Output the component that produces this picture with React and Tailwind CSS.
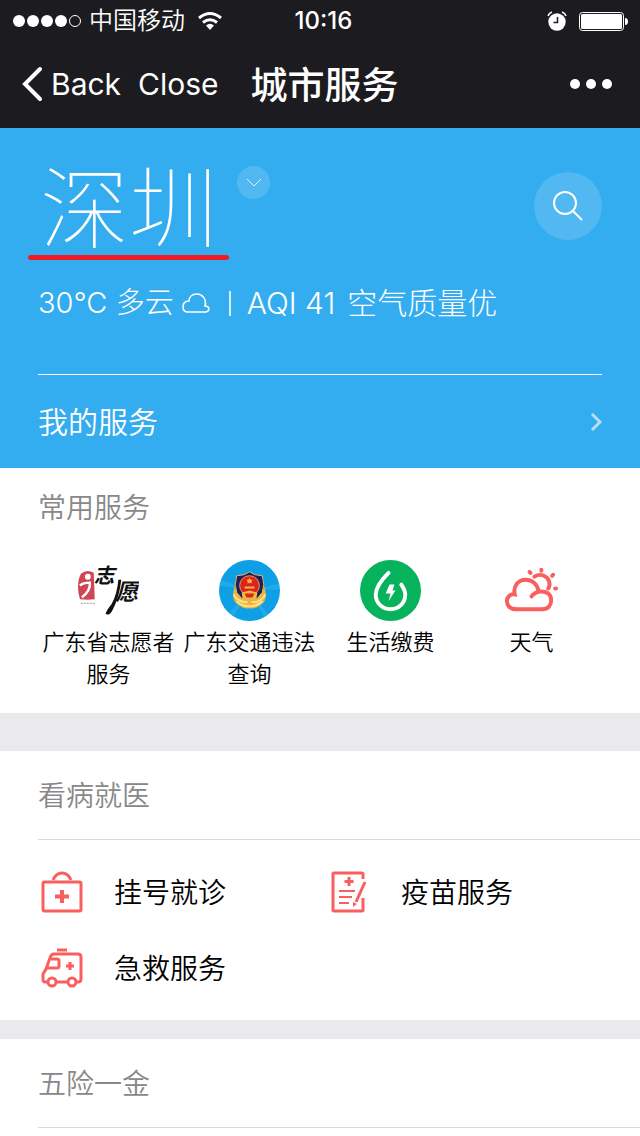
import React from 'react';

const FONT = "font-[Inter,'Noto_Sans_CJK_SC',sans-serif]";

const VolunteerLogo = () => (
  <svg viewBox="0 0 62 62" className="w-[61px] h-[61px]" aria-hidden="true">
    <path d="M3 14 Q9 9 16 13 L17 40 Q10 41 2 40 Q0 34 0 28 Q0 19 3 14Z" fill="#cf4655" />
    <circle cx="10" cy="17" r="3" fill="#fff" />
    <path d="M2 26 Q5 23 12 23 Q13 31 4 38" fill="none" stroke="#fff" strokeWidth="2.500" />
    <path d="M3 44 H17" stroke="#999" strokeWidth="1" strokeDasharray="2 1" />
    <g fill="#111" fontFamily="'Noto Sans CJK SC', sans-serif" fontWeight="700" fontStyle="italic">
      <text x="16" y="23" fontSize="21">志</text>
      <text x="38" y="41" fontSize="23">愿</text>
    </g>
    <path d="M41 20 L44 20 Q42 38 35 51 Q32 57 28 55 Q29 51 34 45 Q40 34 41 20Z" fill="#111" />
  </svg>
);

const TrafficLogo = () => (
  <svg viewBox="0 0 62 62" className="w-[61px] h-[61px]" aria-hidden="true">
    <circle cx="31" cy="31" r="31" fill="#0da0e6" />
    <path d="M31 31 L2 20 L1 26Z M31 31 L61 24 L61 30Z M31 31 L10 54 L15 57Z M31 31 L50 55 L46 58Z" fill="#3fb9f1" opacity=".4" />
    <path d="M16 27 Q11 41 20 46 Q25 50 31 49 Q37 50 42 46 Q51 41 46 27 L40 36 H22Z" fill="#eeb53a" />
    <path d="M15 35 Q19 43 29 43 M33 43 Q43 43 47 35 M18 42 Q23 47 31 47 Q39 47 44 42" fill="none" stroke="#fbe291" strokeWidth="2" />
    <path d="M31 12 Q36 16 44 16 Q47 25 44 33 L39 39 H23 L18 33 Q15 25 18 16 Q26 16 31 12Z" fill="#211f57" stroke="#dfba64" strokeWidth="1" />
    <circle cx="31" cy="26" r="10" fill="#dc231d" stroke="#e9a34b" strokeWidth="1" />
    <path d="M31 18 L32 20 L34 20 L33 22 L33 24 L31 23 L29 24 L29 22 L28 20 L30 20Z M26 27 H36 V29 H26Z M23 33 L31 31 L39 33 L38 39 H24Z" fill="#f6b83c" />
    <path d="M26 34 H36 L34 38 H28Z" fill="#dc231d" />
  </svg>
);

const PaymentLogo = () => (
  <svg viewBox="0 0 62 62" className="w-[61px] h-[61px]" aria-hidden="true">
    <circle cx="31" cy="31" r="31" fill="#06b35c" />
    <path d="M29 13 C22 20 16 27 16 35 C16 44 23 50 31 50 C39 50 46 44 46 35 C46 31 44 28 42 25" fill="none" stroke="#fff" strokeWidth="4" strokeLinecap="round" />
    <path d="M30 25 H35 L33 31 H36 L29 42 L31 34 H26Z" fill="#fff" />
  </svg>
);

const WeatherLogo = () => (
  <svg viewBox="0 0 62 62" className="w-[61px] h-[61px]" fill="none" stroke="#fa5f60" strokeWidth="4" strokeLinecap="round" aria-hidden="true">
    <path d="M15 50 H42 C48 50 51 46 51 41 C51 35 47 32 41 32 C36 32 32 35 31 37" />
    <path d="M15 50 C9 50 6 46 6 42 C6 37 10 34 14 35 C12 26 18 20 25 20 C32 20 37 25 38 31" />
    <path d="M34 17 C40 13 47 16 49 22 Q50 26 48 29" />
    <path d="M29 12 L30 13 M41 10 V11 M53 15 L52 16 M55 29 L56 29" />
  </svg>
);

const BagIcon = () => (
  <svg viewBox="0 0 48 48" className="size-12" fill="none" stroke="#fa5f60" strokeWidth="3" aria-hidden="true">
    <rect x="5" y="14" width="38" height="29" rx="1.5" />
    <path d="M15 12 Q18 5 24 5 Q30 5 33 12" />
    <path d="M24 22 V35 M17 28.5 H31" strokeWidth="4" />
  </svg>
);

const VaccineIcon = () => (
  <svg viewBox="0 0 48 48" className="size-12" fill="none" stroke="#fa5f60" strokeWidth="3" aria-hidden="true">
    <path d="M38 11 V6 Q38 5 37 5 H9 Q8 5 8 6 V42 Q8 43 9 43 H37 Q38 43 38 42 V30" />
    <path d="M24 9 V18 M19.5 13.5 H28.5" />
    <path d="M14 23 H30 M14 29 H27 M14 35 H24" strokeWidth="2" />
    <path d="M40 14 L31 34" />
    <path d="M28 34 L32 36 L28 39Z" fill="#fa5f60" stroke="none" />
  </svg>
);

const AmbulanceIcon = () => (
  <svg viewBox="0 0 48 48" className="size-12" fill="none" stroke="#fa5f60" strokeWidth="3" strokeLinejoin="round" aria-hidden="true">
    <path d="M10 38 H7 Q5 38 5 35 V30 Q7 27 8 25 L12 14 Q13 10 16 10 H40 Q43 10 43 13 V35 Q43 38 40 38 H39 M19 38 H29" />
    <path d="M13 15 H19 Q21 15 21 17 V22 Q21 24 19 24 H9" />
    <path d="M19 6 H29" />
    <path d="M32 18 V26 M28 22 H36" />
    <circle cx="14" cy="38" r="4" />
    <circle cx="34" cy="38" r="4" />
  </svg>
);

const commonServices = [
  { name: '广东省志愿者服务', Icon: VolunteerLogo },
  { name: '广东交通违法查询', Icon: TrafficLogo },
  { name: '生活缴费', Icon: PaymentLogo },
  { name: '天气', Icon: WeatherLogo },
];

const medicalServices = [
  { name: '挂号就诊', Icon: BagIcon },
  { name: '疫苗服务', Icon: VaccineIcon },
  { name: '急救服务', Icon: AmbulanceIcon },
];

function StatusBar() {
  return (
    <div className="grid grid-cols-[1fr_auto_1fr] items-center h-10 pl-[13px] pr-3">
      <div className="flex items-center">
        <div className="flex gap-[2px] mr-2">
          {[0, 1, 2, 3].map((i) => (
            <span key={i} className="size-3 rounded-full bg-white" />
          ))}
          <span className="size-3 rounded-full border border-white" />
        </div>
        <span className="text-[24px] leading-[42px] font-[350]">中国移动</span>
        <svg viewBox="0 0 26 20" className="w-[26px] h-5 ml-3" fill="none" stroke="#fff" strokeWidth="3" aria-hidden="true">
          <path d="M2 7 Q13 -2 24 7" />
          <path d="M6 11.500 Q13 6 20 11.500" />
          <path d="M9 14.500 Q13 11 17 14.500 L13 19Z" fill="#fff" stroke="none" />
        </svg>
      </div>
      <span className="pl-[6px] text-[24px] leading-[42px] font-medium">10:16</span>
      <div className="flex items-center justify-end gap-[11px]">
        <svg viewBox="0 0 20 20" className="size-5" aria-hidden="true">
          <circle cx="10" cy="11" r="8.700" fill="#fff" />
          <path d="M1 5 Q2 2 5 1 M15 1 Q18 2 19 5" fill="none" stroke="#fff" strokeWidth="1.600" />
          <path d="M10.500 6 V11.500 H6.500" fill="none" stroke="#1b1b20" strokeWidth="1.500" />
        </svg>
        <svg viewBox="0 0 50 20" className="w-[50px] h-5" aria-hidden="true">
          <rect x="1.500" y="1.500" width="44" height="18" rx="3" fill="none" stroke="#fff" />
          <rect x="3" y="3" width="41" height="15" rx="1.500" fill="#fff" />
          <path d="M47 7 Q50 7 50 10.500 Q50 14 47 14Z" fill="#fff" />
        </svg>
      </div>
    </div>
  );
}

function NavBar() {
  return (
    <nav className="flex items-center h-[88px] pl-[22px] pr-7 text-[30px]">
      <button className="flex items-center gap-2">
        <svg viewBox="0 0 21 36" className="w-[21px] h-9" fill="none" stroke="#fff" strokeWidth="4" strokeLinecap="round" aria-hidden="true">
          <path d="M18 3 L3 18 L18 33" />
        </svg>
        Back
      </button>
      <button className="ml-[17px]">Close</button>
      <h1 className="ml-8 pt-1 text-[37px] font-medium">城市服务</h1>
      <button aria-label="More" className="ml-auto flex gap-[6px]">
        <span className="size-[10px] rounded-full bg-white" />
        <span className="size-[10px] rounded-full bg-white" />
        <span className="size-[10px] rounded-full bg-white" />
      </button>
    </nav>
  );
}

function Hero() {
  return (
    <section className="bg-[#34acf0] text-white px-[38px]">
      <div className="flex items-start h-[155px]">
        <div className="-ml-[10px] pt-[35px]">
          <h2 className="pl-3 pr-2 text-[89px] leading-[92px] font-thin">深圳</h2>
          <div className="h-[5px] w-[201px] rounded-full bg-[#ee1c22]" />
        </div>
        <button aria-label="切换城市" className="mt-[38px] ml-2 size-[33px] rounded-full bg-white/15 flex items-center justify-center">
          <svg viewBox="0 0 16 10" className="w-4 h-[10px]" fill="none" stroke="#fff" strokeOpacity=".8" aria-hidden="true">
            <path d="M1 1 L8 8 L15 1" />
          </svg>
        </button>
        <button aria-label="搜索" className="ml-auto mt-11 size-[68px] rounded-full bg-white/15 flex items-center justify-center">
          <svg viewBox="0 0 32 32" className="size-8" fill="none" stroke="#fff" strokeWidth="2" aria-hidden="true">
            <circle cx="13" cy="13" r="11" />
            <path d="M21 21 L30 30" />
          </svg>
        </button>
      </div>
      <div className="flex items-center h-10 mb-[51px] text-[29px] leading-[42px] font-light">
        <span>30°C 多云</span>
        <svg viewBox="0 0 28 20" className="w-7 h-5 ml-2 mr-[19px]" fill="none" stroke="#fff" strokeWidth="1.600" aria-hidden="true">
          <path d="M6 19 H24 C28 18 28 13 23 13 C25 6 20 1 15 1 C10 1 7 4 7 8 C3 8 1 10 1 14 C1 17 3 19 6 19Z" />
        </svg>
        <span className="w-[2px] h-[25px] bg-white/80 mr-4" />
        <span className="mr-3 text-[30px]">AQI 41</span>
        <span className="text-[30px]">空气质量优</span>
      </div>
      <a href="#my-services" className="flex items-center justify-between h-[94px] border-t border-white text-[30px] leading-[48px] font-[350]">
        我的服务
        <svg viewBox="0 0 12 20" className="w-3 h-5" fill="none" stroke="#b5dffa" strokeWidth="3" aria-hidden="true">
          <path d="M2 2 L10 10 L2 18" />
        </svg>
      </a>
    </section>
  );
}

function SectionTitle({ children }) {
  return (
    <h3 className="ml-[38px] h-[89px] border-b border-[#d9d9d9] text-[28px] leading-[91px] font-[350] text-[#888]">
      {children}
    </h3>
  );
}

export default function App() {
  return (
    <div className={`${FONT} min-h-screen bg-white text-black`}>
      <header className="bg-[#1b1b20] text-white">
        <StatusBar />
        <NavBar />
      </header>

      <Hero />

      <section className="px-[38px] pt-5 pb-[23px]">
        <h3 className="text-[28px] leading-10 font-[350] text-[#888]">常用服务</h3>
        <div className="grid grid-cols-4 mt-8">
          {commonServices.map(({ name, Icon }) => (
            <a key={name} href="#service" className="flex flex-col items-center text-center text-[22px] leading-8 font-[350]">
              <Icon />
              <span className="mt-[5px] px-1">{name}</span>
            </a>
          ))}
        </div>
      </section>

      <div className="h-[38px] bg-[#eaeaec]" />

      <section>
        <SectionTitle>看病就医</SectionTitle>
        <div className="grid grid-cols-2 pl-[38px] pr-7 py-[14px]">
          {medicalServices.map(({ name, Icon }) => (
            <a key={name} href="#medical" className="flex items-center gap-7 h-[76px] text-[28px] font-[350]">
              <Icon />
              <span className="pt-[2px]">{name}</span>
            </a>
          ))}
        </div>
      </section>

      <div className="h-[19px] bg-[#eaeaec]" />

      <section className="pb-2">
        <SectionTitle>五险一金</SectionTitle>
      </section>
    </div>
  );
}
